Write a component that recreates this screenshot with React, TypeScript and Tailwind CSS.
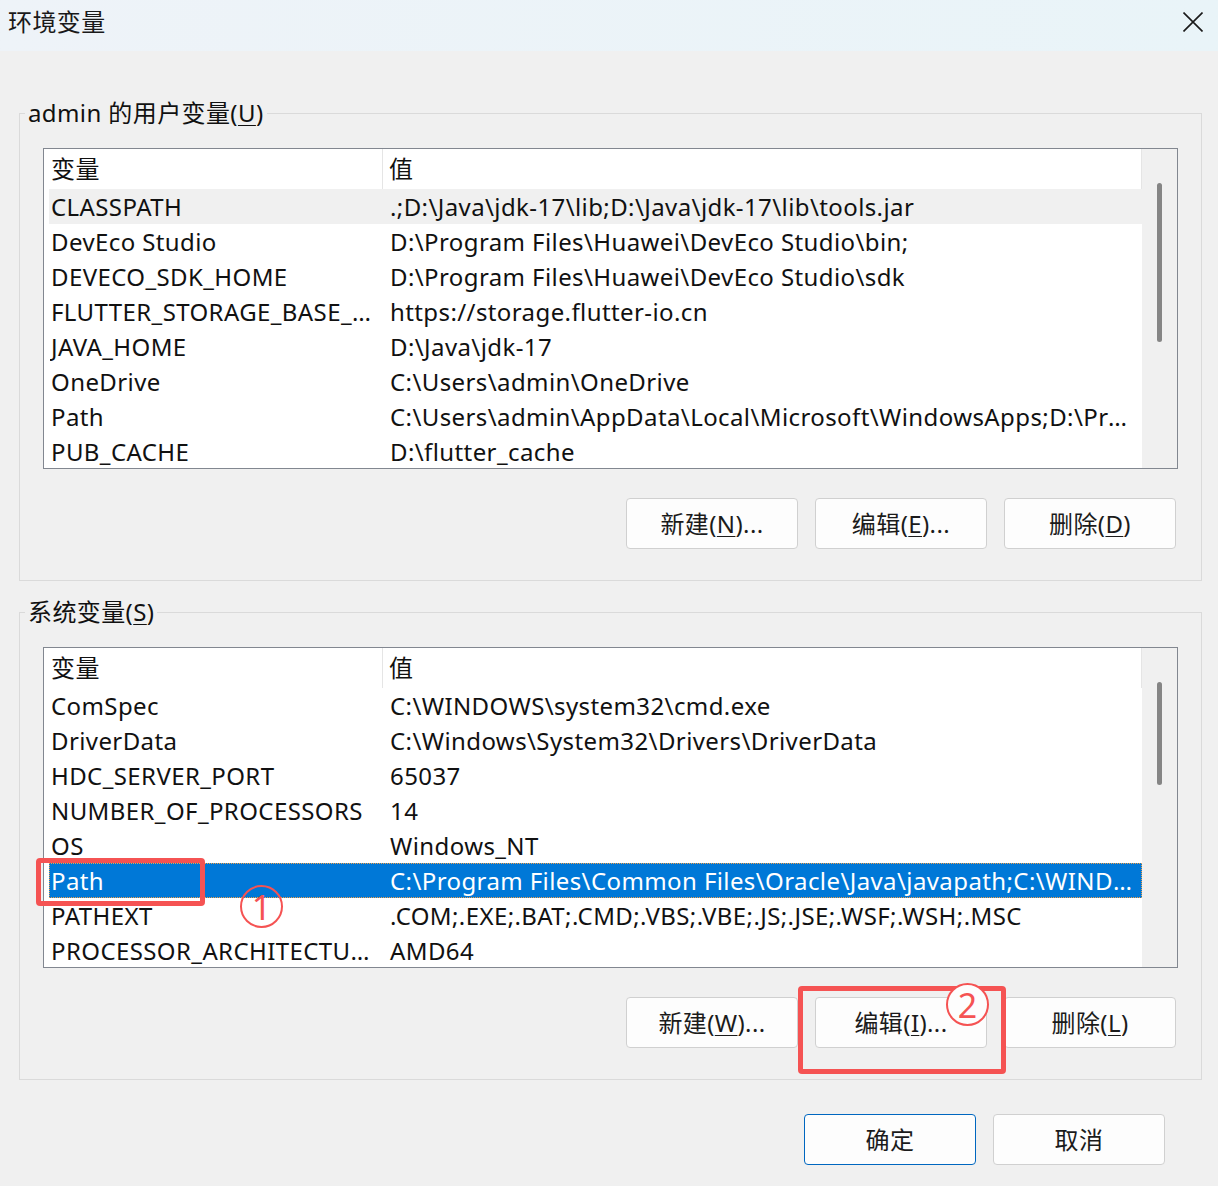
import * as React from "react";

type Row = { name: string; value: string };

const userVars: Row[] = [
  { name: "CLASSPATH", value: ".;D:\\Java\\jdk-17\\lib;D:\\Java\\jdk-17\\lib\\tools.jar" },
  { name: "DevEco Studio", value: "D:\\Program Files\\Huawei\\DevEco Studio\\bin;" },
  { name: "DEVECO_SDK_HOME", value: "D:\\Program Files\\Huawei\\DevEco Studio\\sdk" },
  { name: "FLUTTER_STORAGE_BASE_URL", value: "https://storage.flutter-io.cn" },
  { name: "JAVA_HOME", value: "D:\\Java\\jdk-17" },
  { name: "OneDrive", value: "C:\\Users\\admin\\OneDrive" },
  { name: "Path", value: "C:\\Users\\admin\\AppData\\Local\\Microsoft\\WindowsApps;D:\\Program Files\\Huawei" },
  { name: "PUB_CACHE", value: "D:\\flutter_cache" },
];

const systemVars: Row[] = [
  { name: "ComSpec", value: "C:\\WINDOWS\\system32\\cmd.exe" },
  { name: "DriverData", value: "C:\\Windows\\System32\\Drivers\\DriverData" },
  { name: "HDC_SERVER_PORT", value: "65037" },
  { name: "NUMBER_OF_PROCESSORS", value: "14" },
  { name: "OS", value: "Windows_NT" },
  { name: "Path", value: "C:\\Program Files\\Common Files\\Oracle\\Java\\javapath;C:\\WINDOWS\\system32" },
  { name: "PATHEXT", value: ".COM;.EXE;.BAT;.CMD;.VBS;.VBE;.JS;.JSE;.WSF;.WSH;.MSC" },
  { name: "PROCESSOR_ARCHITECTURE", value: "AMD64" },
];

const Key = ({ children }: { children: React.ReactNode }) => (
  <span className="underline decoration-1 underline-offset-[3px]">{children}</span>
);

function VarList({
  rows,
  selected,
  focused,
  thumbHeight,
}: {
  rows: Row[];
  selected: number;
  focused: boolean;
  thumbHeight: number;
}) {
  return (
    <div className="flex h-[321px] border border-[#828790] bg-white">
      <div className="flex min-w-0 flex-1 flex-col overflow-hidden pl-[5px]">
        <div className="flex h-[40px] shrink-0 items-center">
          <div className="flex h-full w-[334px] items-center border-r border-[#e5e5e5] pl-[2px]">变量</div>
          <div className="flex h-full flex-1 items-center border-r border-[#e5e5e5] pl-[6px]">值</div>
        </div>
        {rows.map((r, i) => {
          const isSel = i === selected;
          const rowCls = isSel
            ? focused
              ? "bg-[#0078d7] text-white border border-dotted border-[#f0a04b]"
              : "bg-[#f0f0f0] border border-transparent"
            : "border border-transparent";
          return (
            <div key={r.name} className={`flex h-[35px] shrink-0 items-center ${rowCls}`}>
              <div className="w-[333px] truncate pl-[1px] pr-[8px]">{r.name}</div>
              <div className="min-w-0 flex-1 truncate pl-[7px] pr-[6px]">{r.value}</div>
            </div>
          );
        })}
      </div>
      <div className="flex w-[35px] shrink-0 justify-center bg-[#f0f0f0] pt-[34px]">
        <div className="w-[5px] rounded-full bg-[#858585]" style={{ height: thumbHeight }} />
      </div>
    </div>
  );
}

function Btn({ children, primary }: { children: React.ReactNode; primary?: boolean }) {
  return (
    <button
      className={`flex h-[51px] w-[172px] items-center justify-center rounded-[4px] border bg-[#fdfdfd] text-[#1b1b1b] ${
        primary ? "border-[#0067c0]" : "border-[#d0d0d0]"
      }`}
    >
      {children}
    </button>
  );
}

function Group({ legend, children }: { legend: React.ReactNode; children: React.ReactNode }) {
  return (
    <div className="relative w-[1183px] border border-[#dadada] px-[23px] pb-[31px] pt-[34px]">
      <span className="absolute -top-[17px] left-[5px] bg-[#f0f0f0] px-[3px] leading-[32px]">{legend}</span>
      {children}
    </div>
  );
}

export default function App() {
  return (
    <div className="relative h-[1186px] w-[1218px] overflow-hidden bg-[#f0f0f0] font-['Noto_Sans','Noto_Sans_CJK_SC',sans-serif] text-[24px] tracking-[0.4px] text-[#111]">
      {/* title bar */}
      <div className="flex h-[51px] items-center justify-between bg-gradient-to-r from-[#eef3f8] to-[#e9f4f8] pb-[8px] pl-[8px] pr-[15px]">
        <span className="text-[#1a1a1a]">环境变量</span>
        <svg width="20" height="20" viewBox="0 0 20 20" className="text-[#1a1a1a]">
          <path d="M0.5 0.5 L19.5 19.5 M19.5 0.5 L0.5 19.5" stroke="currentColor" strokeWidth="1.6" />
        </svg>
      </div>

      <div className="flex flex-col pl-[19px]">
        <div className="mt-[62px]">
          <Group
            legend={
              <>
                admin 的用户变量(<Key>U</Key>)
              </>
            }
          >
            <VarList rows={userVars} selected={0} focused={false} thumbHeight={159} />
            <div className="mt-[29px] flex justify-end gap-[17px] pr-[2px]">
              <Btn>
                新建(<Key>N</Key>)...
              </Btn>
              <Btn>
                编辑(<Key>E</Key>)...
              </Btn>
              <Btn>
                删除(<Key>D</Key>)
              </Btn>
            </div>
          </Group>
        </div>

        <div className="mt-[31px]">
          <Group
            legend={
              <>
                系统变量(<Key>S</Key>)
              </>
            }
          >
            <VarList rows={systemVars} selected={5} focused={true} thumbHeight={103} />
            <div className="mt-[29px] flex justify-end gap-[17px] pr-[2px]">
              <Btn>
                新建(<Key>W</Key>)...
              </Btn>
              <Btn>
                编辑(<Key>I</Key>)...
              </Btn>
              <Btn>
                删除(<Key>L</Key>)
              </Btn>
            </div>
          </Group>
        </div>

        <div className="mt-[34px] flex justify-end gap-[17px] pr-[53px]">
          <Btn primary>确定</Btn>
          <Btn>取消</Btn>
        </div>
      </div>

      {/* annotations */}
      <div className="absolute left-[36px] top-[858px] h-[48px] w-[169px] rounded-[4px] border-[5px] border-[#f55353]" />
      <div className="absolute left-[240px] top-[885px] flex h-[43px] w-[43px] items-center justify-center rounded-full border-[2.5px] border-[#f55353] text-[34px] leading-none tracking-normal text-[#f55353]">
        1
      </div>
      <div className="absolute left-[798px] top-[986px] h-[88px] w-[208px] rounded-[4px] border-[5px] border-[#f55353]" />
      <div className="absolute left-[946px] top-[983px] flex h-[43px] w-[43px] items-center justify-center rounded-full border-[2.5px] border-[#f55353] bg-[#fdfdfd] text-[34px] leading-none tracking-normal text-[#f55353]">
        2
      </div>
    </div>
  );
}
